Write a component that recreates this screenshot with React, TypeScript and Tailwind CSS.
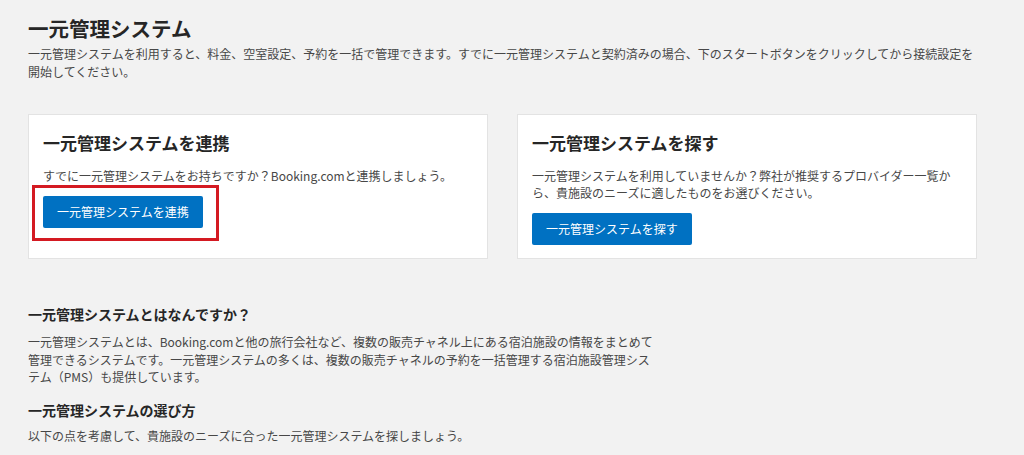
import React from "react";

const cards = [
  {
    title: "一元管理システムを連携",
    text: "すでに一元管理システムをお持ちですか？Booking.comと連携しましょう。",
    button: "一元管理システムを連携",
    marked: true,
  },
  {
    title: "一元管理システムを探す",
    text: "一元管理システムを利用していませんか？弊社が推奨するプロバイダー一覧から、貴施設のニーズに適したものをお選びください。",
    button: "一元管理システムを探す",
    marked: false,
  },
];

export default function App() {
  return (
    <div
      className="min-h-[455px] w-full bg-[#f2f2f2] text-[#474747]"
      style={{ fontFamily: '"Noto Sans CJK JP", "Noto Sans", sans-serif' }}
    >
      <div className="ml-[28px] w-[949px] pt-[14px]">
        <h1 className="text-[20.5px] font-bold leading-[28px] text-[#262626]">
          一元管理システム
        </h1>
        <p className="mt-[3px] text-[12px] leading-[18px]">
          一元管理システムを利用すると、料金、空室設定、予約を一括で管理できます。すでに一元管理システムと契約済みの場合、下のスタートボタンをクリックしてから接続設定を開始してください。
        </p>

        {/* Cards */}
        <div className="mt-[33px] grid grid-cols-[460px_460px] gap-[29px]">
          {cards.map((card, index) => (
            <div
              key={index}
              className="border border-[#e3e3e3] bg-white px-[14px] pb-[13px] pt-[15px]"
            >
              <h2 className="text-[17px] font-bold leading-[26px] text-[#262626]">
                {card.title}
              </h2>
              <p className="mt-[11px] pr-[2px] text-[12px] leading-[17px]">{card.text}</p>
              <div className="relative mt-[12px] inline-block">
                <button className="h-[32px] rounded-[2px] bg-[#0071c2] px-[14px] text-[12px] text-white">
                  {card.button}
                </button>
                {card.marked && (
                  <div className="pointer-events-none absolute -left-[11px] -top-[11px] h-[56px] w-[187px] border-[3px] border-[#d41a22]" />
                )}
              </div>
            </div>
          ))}
        </div>

        {/* About */}
        <div className="mt-[45px]">
          <h3 className="text-[14px] font-bold leading-[20px] text-[#262626]">
            一元管理システムとはなんですか？
          </h3>
          <p className="mt-[9px] text-[12px] leading-[17.5px]">
            一元管理システムとは、Booking.comと他の旅行会社など、複数の販売チャネル上にある宿泊施設の情報をまとめて
            <br />
            管理できるシステムです。一元管理システムの多くは、複数の販売チャネルの予約を一括管理する宿泊施設管理シス
            <br />
            テム（PMS）も提供しています。
          </p>
          <h3 className="mt-[14px] text-[14px] font-bold leading-[20px] text-[#262626]">
            一元管理システムの選び方
          </h3>
          <p className="mt-[7px] text-[12px] leading-[17.5px]">
            以下の点を考慮して、貴施設のニーズに合った一元管理システムを探しましょう。
          </p>
        </div>
      </div>
    </div>
  );
}
